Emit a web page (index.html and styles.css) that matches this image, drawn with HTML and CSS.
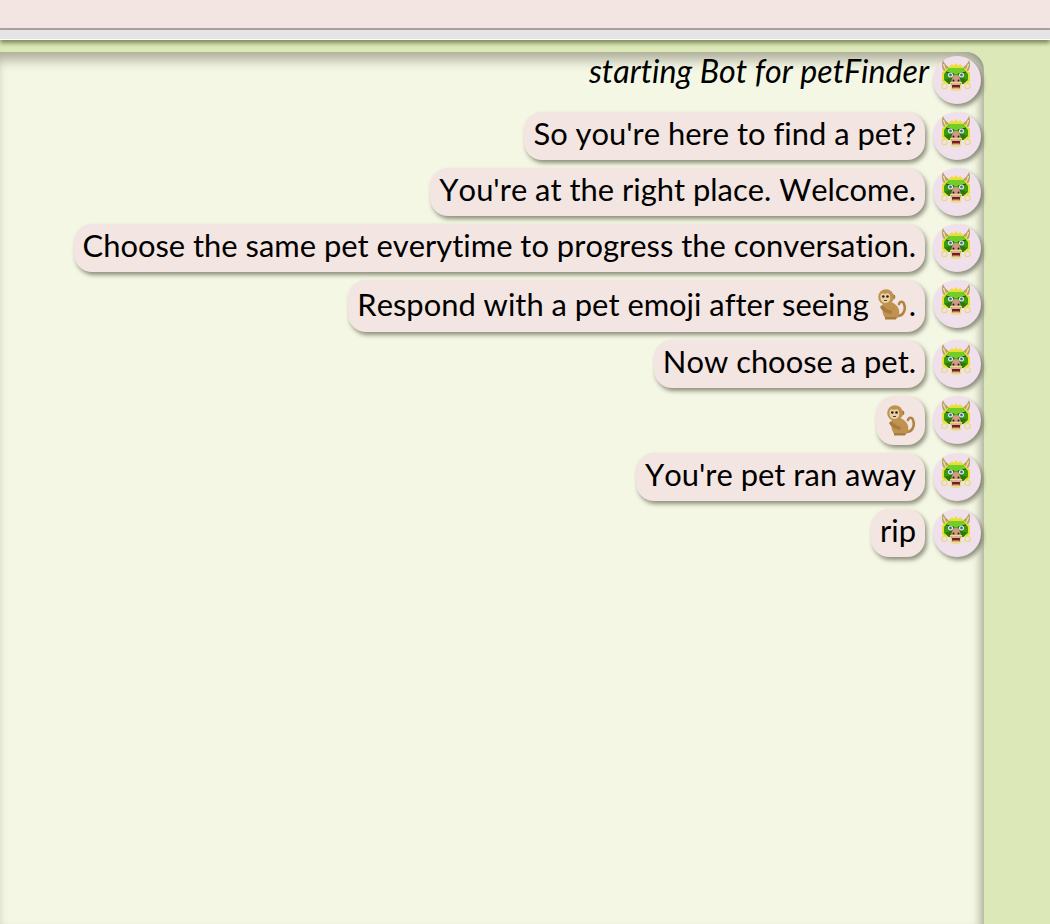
FILE: index.html
```html
<!DOCTYPE html>
<html lang="en">
<head>
    <meta charset="UTF-8">
    <title>petFinder</title>
    <link rel="stylesheet" href="styles.css">
</head>
<body>
<svg class="defs" width="0" height="0">
    <symbol id="dragon" viewBox="0 0 32 32">
        <!-- horns -->
        <path d="M2 0 C0 5 1 10 5 14 L11 9 C7 7 4 5 2 0Z" fill="#b8a066"/>
        <path d="M28 0 C30 5 29 10 25 14 L19 9 C23 7 26 5 28 0Z" fill="#b8a066"/>
        <path d="M2.5 4 C3 7 4 9 6 11" fill="none" stroke="#efe49c" stroke-width="1.3"/>
        <path d="M27.5 4 C27 7 26 9 24 11" fill="none" stroke="#efe49c" stroke-width="1.3"/>
        <!-- mane -->
        <path d="M8 7 L11 4 L13 6 L15 3 L17 6 L19 4 L22 7 L29 13 L29 21 L26 24 H4 L1 21 L1 13Z" fill="#e9df30"/>
        <!-- face -->
        <path d="M3 14 L8 8 H22 L27 14 V20 L22 24 H8 L3 20Z" fill="#3c9a10"/>
        <path d="M8 8 H22 L25 12 L15 14.5 L5 12Z" fill="#74cc26"/>
        <path d="M4 20 L10 17.5 H20 L26 20 L22 24 H8Z" fill="#2c780c"/>
        <!-- eyes -->
        <path d="M5 12 L13 14 M25 12 L17 14" stroke="#1a5408" stroke-width="1.2"/>
        <circle cx="9.5" cy="15" r="2.5" fill="#e6eef2"/>
        <circle cx="20.5" cy="15" r="2.5" fill="#e6eef2"/>
        <circle cx="9.5" cy="15" r="1.4" fill="#4b6a86"/>
        <circle cx="20.5" cy="15" r="1.4" fill="#4b6a86"/>
        <!-- snout -->
        <path d="M12 16 Q15 14 18 16 L20 22 H10Z" fill="#cf9a86"/>
        <circle cx="12.5" cy="20.5" r="1" fill="#3a1b10"/>
        <circle cx="17.5" cy="20.5" r="1" fill="#3a1b10"/>
        <!-- mouth -->
        <path d="M9 22 H21 L20 30 Q15 32 10 30Z" fill="#e9df80"/>
        <path d="M10.5 23.5 H19.5 L18.5 28.5 H11.5Z" fill="#7c1a16"/>
        <path d="M11 23.5 H19 V24.7 H11Z" fill="#f4f1e4"/>
        <path d="M12 27.6 H18 V28.5 H12Z" fill="#f4f1e4"/>
        <!-- rings -->
        <circle cx="3.5" cy="26" r="2.7" fill="none" stroke="#e6dc7c" stroke-width="1.2"/>
        <circle cx="26.5" cy="26" r="2.7" fill="none" stroke="#e6dc7c" stroke-width="1.2"/>
    </symbol>
    <symbol id="monkey" viewBox="0 0 30 31">
        <!-- tail -->
        <path d="M20 27 C27 27 29 20 27 15 C26 12 23 12 22 15" fill="none" stroke="#b08544" stroke-width="2.6" stroke-linecap="round"/>
        <!-- body -->
        <path d="M6 14 C12 10 20 14 22 21 C23 26 21 29 19 30 H9 C6 27 4 20 6 14Z" fill="#bf9250"/>
        <path d="M5 16 C8 19 11 21 15 22 L14 25 C9 24 5 22 3 18Z" fill="#a87b3e"/>
        <path d="M8 28 H19 V30.5 H8Z" fill="#a87b3e"/>
        <!-- head -->
        <circle cx="16" cy="8" r="2.4" fill="#a67a3e"/>
        <circle cx="9" cy="8" r="7.8" fill="#bf9250"/>
        <path d="M3.5 7 C3.5 4 6 3.5 8 5 C10 3.5 13 4 13 7 C14 11 12 14 8.5 14 C5 14 3 11 3.5 7Z" fill="#ead2a8"/>
        <circle cx="6.3" cy="7.5" r="1.3" fill="#2d1c0c"/>
        <circle cx="10.5" cy="7.5" r="1.3" fill="#2d1c0c"/>
        <path d="M7 11.5 H10" stroke="#5d3d1c" stroke-width="1"/>
    </symbol>
</svg>

<div class="top"></div>
<div class="bar"></div>

<div class="chat">
    <div class="row">
        <span class="note">starting Bot for petFinder</span>
        <div class="avatar"><svg class="dragon"><use href="#dragon"/></svg></div>
    </div>
    <div class="row">
        <span class="bubble">So you're here to find a pet?</span>
        <div class="avatar"><svg class="dragon"><use href="#dragon"/></svg></div>
    </div>
    <div class="row">
        <span class="bubble">You're at the right place. Welcome.</span>
        <div class="avatar"><svg class="dragon"><use href="#dragon"/></svg></div>
    </div>
    <div class="row">
        <span class="bubble">Choose the same pet everytime to progress the conversation.</span>
        <div class="avatar"><svg class="dragon"><use href="#dragon"/></svg></div>
    </div>
    <div class="row tall">
        <span class="bubble">Respond with a pet emoji after seeing <svg class="monkey"><use href="#monkey"/></svg>.</span>
        <div class="avatar"><svg class="dragon"><use href="#dragon"/></svg></div>
    </div>
    <div class="row">
        <span class="bubble">Now choose a pet.</span>
        <div class="avatar"><svg class="dragon"><use href="#dragon"/></svg></div>
    </div>
    <div class="row mid">
        <span class="bubble solo"><svg class="monkey"><use href="#monkey"/></svg></span>
        <div class="avatar"><svg class="dragon"><use href="#dragon"/></svg></div>
    </div>
    <div class="row">
        <span class="bubble">You're pet ran away</span>
        <div class="avatar"><svg class="dragon"><use href="#dragon"/></svg></div>
    </div>
    <div class="row">
        <span class="bubble">rip</span>
        <div class="avatar"><svg class="dragon"><use href="#dragon"/></svg></div>
    </div>
</div>
</body>
</html>
```

FILE: styles.css
```css
html,body{
    height: 100%;
}
*{
    margin:0;
    padding:0;
    box-sizing: border-box;
}
body{
    width: 1050px;
    height: 924px;
    overflow: hidden;
    display: flex;
    flex-direction: column;
    background: #dce8b8;
    font-family: "Lato", "Noto Sans", sans-serif;
    font-size: 30.9px;
    font-variant-ligatures: none;
    font-kerning: none;
    color: #000;
}
.defs{
    position: absolute;
}
.top{
    height: 30px;
    flex: none;
    background: #f3e5e1;
    border-bottom: 2px solid #aca3a1;
}
.bar{
    height: 10px;
    flex: none;
    background: #e5e5e5;
    border-bottom: 1px solid #fff;
    box-shadow: 0 3px 4px rgba(60,70,30,.6);
}
.chat{
    flex: 1;
    margin: 12px 66px 0 0;
    padding: 4px 3px 0 0;
    background: #f4f7e4;
    border-radius: 0 18px 0 0;
    box-shadow: inset 0 12px 12px -4px rgba(60,60,40,.38), inset -10px 0 8px -6px rgba(60,60,40,.3);
    display: flex;
    flex-direction: column;
    gap: 8px;
}
.row{
    height: 48px;
    display: flex;
    justify-content: flex-end;
    gap: 8px;
}
.row.tall{
    height: 52px;
}
.row.mid{
    height: 49px;
}
.note{
    font-style: italic;
    font-size: 32.2px;
    line-height: 30px;
    margin-right: -4px;
}
.bubble{
    height: 100%;
    padding: 0 9px 6px;
    display: flex;
    align-items: center;
    white-space: pre-wrap;
    background: #f3e5e1;
    border-radius: 18px;
    box-shadow: 2px 3px 4px rgba(60,60,40,.55);
}
.row.tall .bubble{
    padding-bottom: 4px;
}
.row.tall .monkey{
    margin-right: 2px;
}
.bubble.solo{
    padding: 0 9px 0 10px;
}
.avatar{
    width: 48px;
    height: 48px;
    flex: none;
    padding-top: 4px;
    display: flex;
    justify-content: center;
    background: #f0e0ec;
    border-radius: 50%;
    box-shadow: 2px 3px 4px rgba(60,60,40,.55);
}
.dragon{
    width: 32px;
    height: 32px;
}
.monkey{
    width: 30px;
    height: 31px;
    flex: none;
}
```
